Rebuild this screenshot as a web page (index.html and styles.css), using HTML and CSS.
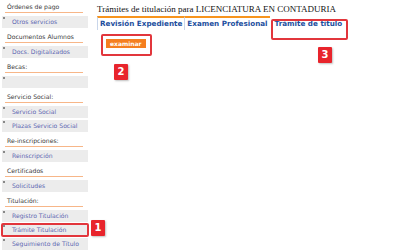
FILE: index.html
```html
<!DOCTYPE html>
<html lang="es">
<head>
    <meta charset="UTF-8">
    <title>Trámites de titulación</title>
    <link rel="stylesheet" href="styles.css">
</head>
<body>
    <div class="menu">
        <div class="cab">Órdenes de pago</div>
        <div class="opc">Otros servicios</div>
        <div class="cab">Documentos Alumnos</div>
        <div class="opc">Docs. Digitalizados</div>
        <div class="cab">Becas:</div>
        <div class="opc"></div>
        <div class="cab">Servicio Social:</div>
        <div class="opc">Servicio Social</div>
        <div class="opc">Plazas Servicio Social</div>
        <div class="cab">Re-inscripciones:</div>
        <div class="opc">Reinscripción</div>
        <div class="cab">Certificados</div>
        <div class="opc">Solicitudes</div>
        <div class="cab">Titulación:</div>
        <div class="opc">Registro Titulación</div>
        <div class="opc marcado">Trámite Titulación</div>
        <div class="opc">Seguimiento de Título</div>
    </div>

    <div class="contenido">
        <div class="titulo">Trámites de titulación para LICENCIATURA EN CONTADURIA</div>
        <div class="pestanas">
            <span class="pestana activa">Revisión Expediente</span>
            <span class="pestana activa">Examen Profesional</span>
            <span class="pestana marcado">Trámite de título</span>
        </div>
        <div class="accion">
            <span class="marco-btn"><button class="btn-examinar">examinar</button></span>
        </div>
    </div>

    <span class="num n1">1</span>
    <span class="num n2">2</span>
    <span class="num n3">3</span>
</body>
</html>
```

FILE: styles.css
```css
body { margin: 0; display: flex; font-family: "DejaVu Sans", Verdana, sans-serif; background: #fff; }
.menu { width: 86px; padding-left: 2px; flex-shrink: 0; }
.cab { height: 10px; line-height: 10px; padding-top: 2px; margin: 0 5px 3px 3px; padding-left: 2px; border-bottom: 1px solid #f7b688; font-size: 6.1px; color: #3a3a3a; }
.opc { position: relative; height: 12px; line-height: 12px; margin-bottom: 2px; padding-left: 10px; background: #ececec; font-size: 6.1px; color: #5d67b2; }
.opc::before { content: ""; position: absolute; left: 1px; top: 1px; width: 2px; height: 2px; background: #888; }
.opc.marcado { outline: 2px solid #e2363c; outline-offset: -1px; border-radius: 1px; }

.contenido { flex: 1; padding-left: 9px; }
.titulo { font-family: "Liberation Serif", serif; font-size: 9px; line-height: 10px; padding-top: 4px; color: #111; }
.pestanas { display: flex; margin-top: 2px; height: 14px; }
.pestana { font-size: 7.2px; font-weight: bold; color: #1d4f9e; line-height: 12px; padding: 0 2px 0 2px; border-left: 1px solid #c9d6ea; border-top: 2px solid transparent; }
.pestana.activa { border-top-color: #f7941d; }
.pestana.marcado { position: relative; border-left-color: transparent; padding-left: 4px; }
.pestana.marcado::after { content: ""; position: absolute; left: 0; top: 1px; width: 73px; height: 17px; border: 2px solid #e2363c; border-radius: 2px; }
.accion { padding: 1px 0 0 4px; }
.marco-btn { display: inline-block; padding: 3px 4px 6px 3px; border: 2px solid #e2363c; border-radius: 2px; }
.btn-examinar { display: block; border: none; margin: 0; padding: 0 4px; height: 9px; line-height: 9px; background: #f57f1f; color: #fff; font-family: "DejaVu Sans", Verdana, sans-serif; font-size: 6px; font-weight: bold; }

.num { position: absolute; width: 14px; height: 16px; line-height: 16px; text-align: center; background: #e8242c; color: #fff; font-family: "DejaVu Sans", sans-serif; font-weight: bold; font-size: 10px; border-radius: 1px; box-shadow: 1px 1px 2px rgba(0,0,0,0.25); }
.n1 { left: 91px; top: 220px; }
.n2 { left: 114px; top: 64px; }
.n3 { left: 318px; top: 47px; }
```
